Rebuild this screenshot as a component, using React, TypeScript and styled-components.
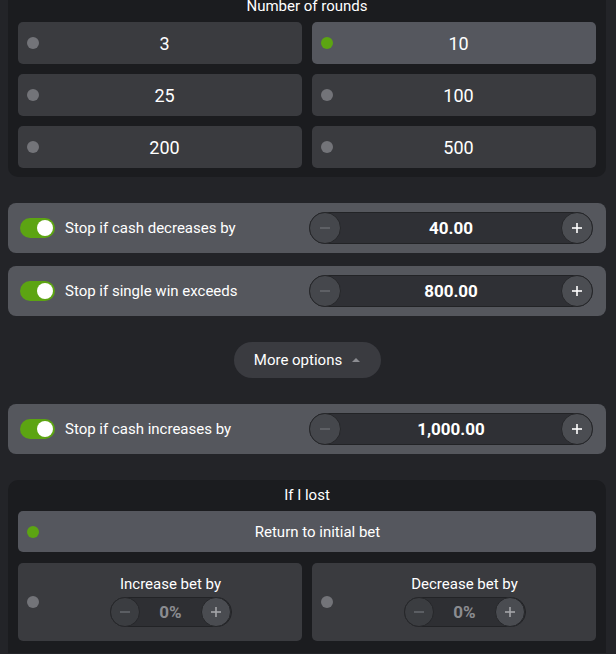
import React, { useState } from 'react';
import styled, { createGlobalStyle } from 'styled-components';

const GlobalStyle = createGlobalStyle`
  html, body {
    margin: 0;
    padding: 0;
    background: #232428;
    font-family: Roboto, "Liberation Sans", sans-serif;
    color: #ffffff;
  }
`;

const ROUNDS = [3, 10, 25, 100, 200, 500];

const Page = styled.div`
  width: 598px;
  margin: -10px 0 0 8px;
  display: flex;
  flex-direction: column;
  gap: 26px;
`;

const Panel = styled.section<{ $top?: boolean }>`
  background: #1b1c1f;
  border-radius: ${({ $top }) => ($top ? '0 0 10px 10px' : '10px 10px 0 0')};
  padding: ${({ $top }) => ($top ? '8px 10px 9px' : '7px 10px 12px')};
  display: flex;
  flex-direction: column;
  gap: 8px;
`;

const PanelTitle = styled.div`
  text-align: center;
  font-size: 15px;
  line-height: 16px;
`;

const Grid = styled.div<{ $rowGap: number }>`
  display: grid;
  grid-template-columns: 1fr 1fr;
  column-gap: 10px;
  row-gap: ${({ $rowGap }) => $rowGap}px;
`;

const Choice = styled.button<{ $active?: boolean; $wide?: boolean; $tall?: number }>`
  grid-column: ${({ $wide }) => ($wide ? '1 / -1' : 'auto')};
  height: ${({ $tall }) => $tall ?? 42}px;
  border: none;
  border-radius: 5px;
  background: ${({ $active }) => ($active ? '#55575e' : '#3a3b3f')};
  color: #ffffff;
  display: flex;
  align-items: center;
  padding: 0 0 0 9px;
  font-family: inherit;
  cursor: pointer;
`;

const Dot = styled.span<{ $active?: boolean }>`
  width: 12px;
  height: 12px;
  border-radius: 50%;
  flex-shrink: 0;
  background: ${({ $active }) => ($active ? '#5ca412' : '#737479')};
`;

const ChoiceLabel = styled.span<{ $size: number; $padRight?: number }>`
  flex: 1;
  text-align: center;
  font-size: ${({ $size }) => $size}px;
  padding-right: ${({ $padRight }) => $padRight ?? 0}px;
`;

const OptionRow = styled.div`
  height: 50px;
  background: #55575d;
  border-radius: 8px;
  display: flex;
  align-items: center;
  justify-content: space-between;
  padding: 0 13px 0 12px;
`;

const Rows = styled.div`
  display: flex;
  flex-direction: column;
  gap: 13px;
`;

const ToggleWrap = styled.label`
  display: flex;
  align-items: center;
  gap: 10px;
  font-size: 15px;
  cursor: pointer;
`;

const Track = styled.span<{ $on: boolean }>`
  width: 35px;
  height: 20px;
  border-radius: 10px;
  background: ${({ $on }) => ($on ? '#5ca412' : '#35363a')};
  display: flex;
  align-items: center;
  justify-content: ${({ $on }) => ($on ? 'flex-end' : 'flex-start')};
  padding: 0 2px;
  box-sizing: border-box;
`;

const Knob = styled.span`
  width: 16px;
  height: 16px;
  border-radius: 50%;
  background: #ffffff;
`;

const Stepper = styled.div<{ $small?: boolean }>`
  width: ${({ $small }) => ($small ? 122 : 284)}px;
  height: ${({ $small }) => ($small ? 30 : 32)}px;
  box-sizing: border-box;
  border-radius: 16px;
  background: ${({ $small }) => ($small ? '#2e2f33' : '#2f3035')};
  border: 1px solid #222326;
  display: flex;
  align-items: center;
  justify-content: space-between;
`;

const StepBtn = styled.button<{ $plus?: boolean; $small?: boolean }>`
  width: ${({ $small }) => ($small ? 30 : 32)}px;
  height: ${({ $small }) => ($small ? 30 : 32)}px;
  margin: -1px;
  border: 1px solid #26272a;
  border-radius: 50%;
  background: ${({ $plus, $small }) => ($plus ? ($small ? '#4a4c51' : '#4b4d52') : $small ? '#3b3d41' : '#45474c')};
  color: ${({ $plus, $small }) => ($plus ? ($small ? '#a4a5a9' : '#ffffff') : '#65676c')};
  display: flex;
  align-items: center;
  justify-content: center;
  padding: 0;
  cursor: pointer;
`;

const StepValue = styled.span<{ $muted?: boolean }>`
  font-size: 17px;
  font-weight: 700;
  color: ${({ $muted }) => ($muted ? '#8b8c90' : '#ffffff')};
`;

const MoreButton = styled.button`
  align-self: center;
  width: 147px;
  height: 36px;
  border: none;
  border-radius: 18px;
  background: #3a3b40;
  color: #ffffff;
  font-family: inherit;
  font-size: 15px;
  display: flex;
  align-items: center;
  justify-content: center;
  gap: 10px;
  cursor: pointer;
`;

const Caret = styled.span`
  width: 0;
  height: 0;
  border-left: 4px solid transparent;
  border-right: 4px solid transparent;
  border-bottom: 4px solid #8c8d92;
`;

const BetCard = styled.div`
  height: 78px;
  border-radius: 5px;
  background: #3a3b3f;
  display: flex;
  align-items: center;
  padding-left: 9px;
`;

const BetBody = styled.div`
  flex: 1;
  display: flex;
  flex-direction: column;
  align-items: center;
  gap: 5px;
  padding-bottom: 1px;
`;

const BetTitle = styled.div`
  font-size: 15px;
  line-height: 16px;
`;

const Sign = ({ plus }: { plus?: boolean }) => (
  <svg width="12" height="12" viewBox="0 0 12 12">
    <path d="M1 6h10" stroke="currentColor" strokeWidth="1.6" />
    {plus && <path d="M6 1v10" stroke="currentColor" strokeWidth="1.6" />}
  </svg>
);

const ValueStepper = ({ value, small }: { value: string; small?: boolean }) => (
  <Stepper $small={small}>
    <StepBtn $small={small}>
      <Sign />
    </StepBtn>
    <StepValue $muted={small}>{value}</StepValue>
    <StepBtn $small={small} $plus>
      <Sign plus />
    </StepBtn>
  </Stepper>
);

const LimitRow = ({ label, value }: { label: string; value: string }) => {
  const [on, setOn] = useState(true);
  return (
    <OptionRow>
      <ToggleWrap onClick={() => setOn(!on)}>
        <Track $on={on}>
          <Knob />
        </Track>
        {label}
      </ToggleWrap>
      <ValueStepper value={value} />
    </OptionRow>
  );
};

export default function App() {
  const [rounds, setRounds] = useState(10);
  const [onLoss, setOnLoss] = useState('reset');

  return (
    <>
      <GlobalStyle />
      <Page>
        <Panel $top>
          <PanelTitle>Number of rounds</PanelTitle>
          <Grid $rowGap={10}>
            {ROUNDS.map((r) => (
              <Choice key={r} $active={r === rounds} onClick={() => setRounds(r)}>
                <Dot $active={r === rounds} />
                <ChoiceLabel $size={18} $padRight={12}>
                  {r}
                </ChoiceLabel>
              </Choice>
            ))}
          </Grid>
        </Panel>

        <Rows>
          <LimitRow label="Stop if cash decreases by" value="40.00" />
          <LimitRow label="Stop if single win exceeds" value="800.00" />
        </Rows>

        <MoreButton>
          More options
          <Caret />
        </MoreButton>

        <LimitRow label="Stop if cash increases by" value="1,000.00" />

        <Panel>
          <PanelTitle>If I lost</PanelTitle>
          <Grid $rowGap={11}>
            <Choice $wide $tall={41} $active={onLoss === 'reset'} onClick={() => setOnLoss('reset')}>
              <Dot $active={onLoss === 'reset'} />
              <ChoiceLabel $size={15}>Return to initial bet</ChoiceLabel>
            </Choice>
            <BetCard onClick={() => setOnLoss('increase')}>
              <Dot $active={onLoss === 'increase'} />
              <BetBody>
                <BetTitle>Increase bet by</BetTitle>
                <ValueStepper value="0%" small />
              </BetBody>
            </BetCard>
            <BetCard onClick={() => setOnLoss('decrease')}>
              <Dot $active={onLoss === 'decrease'} />
              <BetBody>
                <BetTitle>Decrease bet by</BetTitle>
                <ValueStepper value="0%" small />
              </BetBody>
            </BetCard>
          </Grid>
        </Panel>
      </Page>
    </>
  );
}
